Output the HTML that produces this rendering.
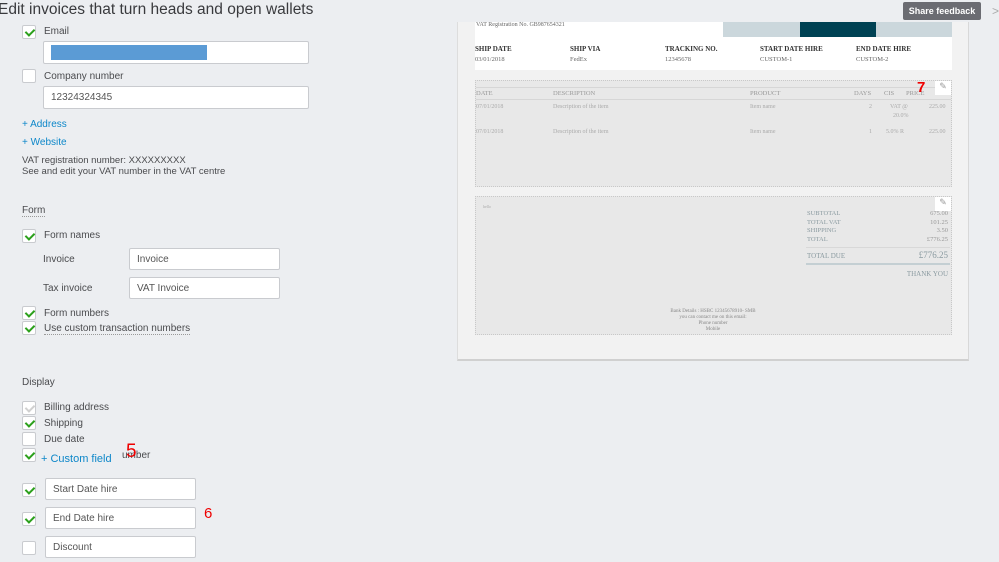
<!DOCTYPE html>
<html><head><style>
*{margin:0;padding:0;box-sizing:border-box}
body{width:999px;height:562px;overflow:hidden;background:#eceef1;font-family:"Liberation Sans",sans-serif;color:#393a3d;position:relative}
.a{position:absolute}
.t{font-size:10px;color:#4a4b4e;white-space:nowrap}
.cb{position:absolute;width:14px;height:14px;background:#fff;border:1px solid #c9cbcf;border-radius:2px}
.cb.c::after{content:"";position:absolute;left:4px;top:1px;width:4px;height:7px;border:solid #2ca01c;border-width:0 2px 2px 0;transform:rotate(45deg)}
.cb.g::after{content:"";position:absolute;left:4px;top:1px;width:4px;height:7px;border:solid #d0d0d0;border-width:0 2px 2px 0;transform:rotate(45deg)}
.in{position:absolute;background:#fff;border:1px solid #c9cbcf;border-radius:2px;font-size:10px;color:#555;padding-left:7px;display:flex;align-items:center}
.lk{color:#0d87c9;font-size:10px}
.s{font-family:"Liberation Serif",serif;white-space:nowrap}
</style></head><body>
<div class="a" style="left:-2px;top:1px;font-size:15.5px;color:#393a3d">Edit invoices that turn heads and open wallets</div>
<div class="a" style="left:903px;top:2px;width:78px;height:18px;background:#6b6c72;border-radius:2px;color:#fff;font-size:9px;font-weight:bold;text-align:center;line-height:18px">Share feedback</div>
<div class="a" style="left:992px;top:4px;color:#aaa;font-size:12px">&gt;</div>

<div class="cb c" style="left:22px;top:25px"></div><div class="a t" style="left:44px;top:26px">Email</div>
<div class="in" style="left:43px;top:41px;width:266px;height:23px"><div style="width:156px;height:15px;background:#5b9bd5"></div></div>
<div class="cb" style="left:22px;top:69px"></div><div class="a t" style="left:44px;top:71px">Company number</div>
<div class="in" style="left:43px;top:86px;width:266px;height:23px">12324324345</div>
<div class="a lk" style="left:22px;top:119px">+ Address</div>
<div class="a lk" style="left:22px;top:137px">+ Website</div>
<div class="a t" style="left:22px;top:155px;font-size:9.5px">VAT registration number: XXXXXXXXX</div>
<div class="a t" style="left:22px;top:166px;font-size:9.5px">See and edit your VAT number in the VAT centre</div>

<div class="a t" style="left:22px;top:205px;border-bottom:1px dotted #999">Form</div>
<div class="cb c" style="left:22px;top:229px"></div><div class="a t" style="left:44px;top:230px">Form names</div>
<div class="a t" style="left:43px;top:254px">Invoice</div>
<div class="in" style="left:129px;top:248px;width:151px;height:22px">Invoice</div>
<div class="a t" style="left:43px;top:283px">Tax invoice</div>
<div class="in" style="left:129px;top:277px;width:151px;height:22px">VAT Invoice</div>
<div class="cb c" style="left:22px;top:306px"></div><div class="a t" style="left:44px;top:308px">Form numbers</div>
<div class="cb c" style="left:22px;top:321px"></div><div class="a t" style="left:44px;top:323px;border-bottom:1px dotted #999">Use custom transaction numbers</div>

<div class="a t" style="left:22px;top:377px">Display</div>
<div class="cb g" style="left:22px;top:401px"></div><div class="a t" style="left:44px;top:402px">Billing address</div>
<div class="cb c" style="left:22px;top:416px"></div><div class="a t" style="left:44px;top:418px">Shipping</div>
<div class="cb" style="left:22px;top:432px"></div><div class="a t" style="left:44px;top:434px">Due date</div>
<div class="cb c" style="left:22px;top:448px"></div><div class="a t" style="left:122px;top:450px">umber</div>
<div class="a lk" style="left:41px;top:453px;font-size:11px">+ Custom field</div>
<div class="a" style="left:126px;top:441px;color:#e00;font-size:19px">5</div>
<div class="cb c" style="left:22px;top:483px"></div><div class="in" style="left:45px;top:478px;width:151px;height:22px">Start Date hire</div>
<div class="cb c" style="left:22px;top:512px"></div><div class="in" style="left:45px;top:507px;width:151px;height:22px">End Date hire</div>
<div class="a" style="left:204px;top:505px;color:#e00;font-size:15px">6</div>
<div class="cb" style="left:22px;top:541px"></div><div class="in" style="left:45px;top:536px;width:151px;height:22px">Discount</div>

<!-- preview -->
<div class="a" style="left:457px;top:22px;width:512px;height:339px;background:#f2f2f2;border-right:1px solid #d8d8d8;border-bottom:2px solid #d0d0d0;border-left:1px solid #ddd"></div>
<div class="a" style="left:475px;top:22px;width:477px;height:48px;background:#fff"></div>
<div class="a" style="left:723px;top:22px;width:229px;height:15px;background:#cbd7dc"></div>
<div class="a" style="left:800px;top:22px;width:76px;height:15px;background:#004254"></div>
<div class="a s" style="left:476px;top:22px;font-size:6px;color:#666">VAT Registration No. GB987654321</div>
<div class="a s" style="left:475px;top:45px;font-size:7px;font-weight:bold;color:#333">SHIP DATE</div>
<div class="a s" style="left:475px;top:56px;font-size:6.5px;color:#666">03/01/2018</div>
<div class="a s" style="left:570px;top:45px;font-size:7px;font-weight:bold;color:#333">SHIP VIA</div>
<div class="a s" style="left:570px;top:56px;font-size:6.5px;color:#666">FedEx</div>
<div class="a s" style="left:665px;top:45px;font-size:7px;font-weight:bold;color:#333">TRACKING NO.</div>
<div class="a s" style="left:665px;top:56px;font-size:6.5px;color:#666">12345678</div>
<div class="a s" style="left:760px;top:45px;font-size:7px;font-weight:bold;color:#333">START DATE HIRE</div>
<div class="a s" style="left:760px;top:56px;font-size:6.5px;color:#666">CUSTOM-1</div>
<div class="a s" style="left:856px;top:45px;font-size:7px;font-weight:bold;color:#333">END DATE HIRE</div>
<div class="a s" style="left:856px;top:56px;font-size:6.5px;color:#666">CUSTOM-2</div>

<div class="a" style="left:475px;top:80px;width:477px;height:107px;background:#e8e8e8;border:1px dotted #c8c8c8"></div>
<div class="a" style="left:476px;top:87px;width:475px;height:13px;border-top:1px solid #d6d6d6;border-bottom:1px solid #d6d6d6"></div>
<div class="a s" style="left:476px;top:90px;font-size:6.5px;color:#999">DATE</div>
<div class="a s" style="left:553px;top:90px;font-size:6.5px;color:#999">DESCRIPTION</div>
<div class="a s" style="left:750px;top:90px;font-size:6.5px;color:#999">PRODUCT</div>
<div class="a s" style="left:854px;top:90px;font-size:6.5px;color:#999">DAYS</div>
<div class="a s" style="left:884px;top:90px;font-size:6.5px;color:#999">CIS</div>
<div class="a s" style="left:906px;top:90px;font-size:6.5px;color:#999">PRICE</div>
<div class="a" style="left:917px;top:79px;color:#e00;font-size:15px;font-weight:bold">7</div>
<div class="a" style="left:935px;top:81px;width:16px;height:14px;background:#fff;color:#999;font-size:9px;text-align:center">✎</div>
<div class="a s" style="left:476px;top:104px;font-size:6px;color:#aaa">07/01/2018</div>
<div class="a s" style="left:553px;top:104px;font-size:6px;color:#aaa">Description of the item</div>
<div class="a s" style="left:750px;top:104px;font-size:6px;color:#aaa">Item name</div>
<div class="a s" style="left:869px;top:104px;font-size:6px;color:#aaa">2</div>
<div class="a s" style="left:890px;top:104px;font-size:6px;color:#aaa">VAT @</div>
<div class="a s" style="left:893px;top:113px;font-size:6px;color:#aaa">20.0%</div>
<div class="a s" style="left:929px;top:104px;font-size:6px;color:#aaa">225.00</div>
<div class="a s" style="left:476px;top:129px;font-size:6px;color:#aaa">07/01/2018</div>
<div class="a s" style="left:553px;top:129px;font-size:6px;color:#aaa">Description of the item</div>
<div class="a s" style="left:750px;top:129px;font-size:6px;color:#aaa">Item name</div>
<div class="a s" style="left:869px;top:129px;font-size:6px;color:#aaa">1</div>
<div class="a s" style="left:886px;top:129px;font-size:6px;color:#aaa">5.0% R</div>
<div class="a s" style="left:929px;top:129px;font-size:6px;color:#aaa">225.00</div>

<div class="a" style="left:475px;top:196px;width:477px;height:139px;background:#e8e8e8;border:1px dotted #c8c8c8"></div>
<div class="a" style="left:935px;top:197px;width:16px;height:14px;background:#fff;color:#999;font-size:9px;text-align:center">✎</div>
<div class="a s" style="left:483px;top:204px;font-size:4px;color:#aaa">hello</div>
<div class="a s" style="left:807px;top:210px;font-size:6.5px;color:#8a9aa0;line-height:8.6px">SUBTOTAL<br>TOTAL VAT<br>SHIPPING<br>TOTAL</div>
<div class="a s" style="left:900px;top:210px;width:48px;text-align:right;font-size:6.5px;color:#999;line-height:8.6px">675.00<br>101.25<br>3.50<br>£776.25</div>
<div class="a" style="left:806px;top:247px;width:144px;height:1px;background:#d8d8d8"></div>
<div class="a s" style="left:807px;top:252px;font-size:7px;color:#8a9aa0">TOTAL DUE</div>
<div class="a s" style="left:900px;top:250px;width:48px;text-align:right;font-size:9px;color:#8a9aa0">£776.25</div>
<div class="a" style="left:806px;top:263px;width:144px;height:2px;background:#c4cfd3"></div>
<div class="a s" style="left:880px;top:270px;width:68px;text-align:right;font-size:7px;color:#8a9aa0">THANK YOU</div>
<div class="a s" style="left:600px;top:309px;width:226px;text-align:center;font-size:5px;color:#888;line-height:6px">Bank Details : HSBC 12345678910- SMB<br>you can contact me on this email:<br>Phone number<br>Mobile</div>
</body></html>
